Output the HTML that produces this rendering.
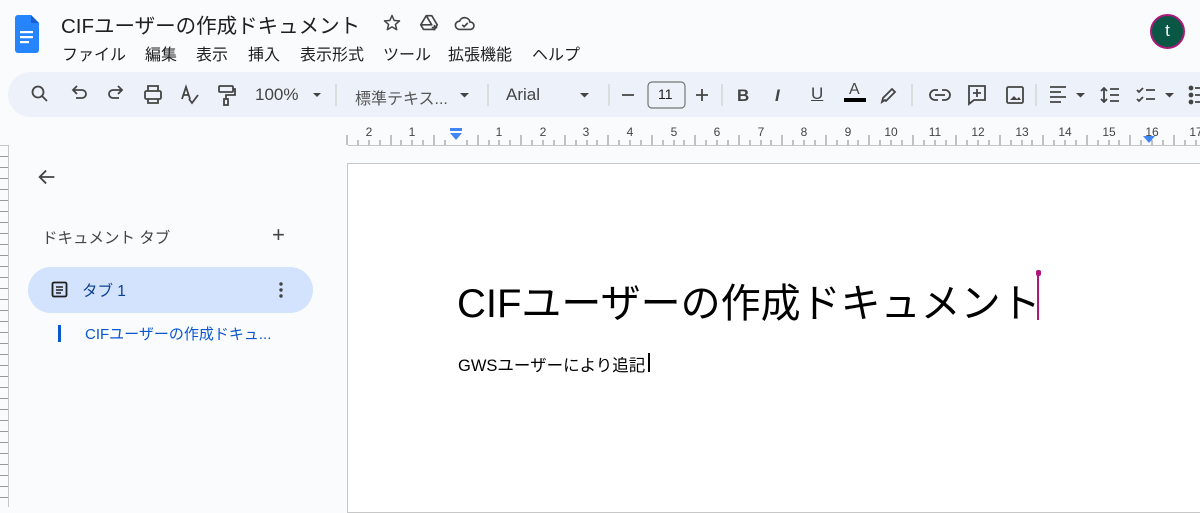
<!DOCTYPE html>
<html><head><meta charset="utf-8"><style>
*{margin:0;padding:0;box-sizing:border-box}
body{width:1200px;height:507px;overflow:hidden;background:#f9fbfd;font-family:"Liberation Sans","Noto Sans CJK JP",sans-serif;color:#1f1f1f;position:relative}
.a{position:absolute;white-space:nowrap}
.m{position:absolute;top:41px;font-size:16px;white-space:nowrap}
</style></head><body>
<svg class="a" style="left:15px;top:15px" width="24" height="38" viewBox="0 0 24 38">
<path d="M3 0H16L24 8V35a3 3 0 0 1-3 3H3a3 3 0 0 1-3-3V3a3 3 0 0 1 3-3z" fill="#2684fc"/>
<path d="M16 0V8H24z" fill="#1a5fd0"/>
<rect x="5" y="16" width="13" height="2.2" fill="#fff"/><rect x="5" y="21" width="13" height="2.2" fill="#fff"/><rect x="5" y="26" width="9" height="2.2" fill="#fff"/>
</svg>
<div class="a" style="left:61px;top:9px;font-size:20.5px;color:#1f1f1f">CIFユーザーの作成ドキュメント</div>
<svg class="a" style="left:382px;top:13px" width="20" height="20" viewBox="0 0 24 24"><path d="M12 3l2.6 6 6.4.5-4.9 4.2 1.5 6.3L12 16.6 6.4 20l1.5-6.3L3 9.5l6.4-.5z" fill="none" stroke="#444" stroke-width="1.8" stroke-linejoin="round"/></svg>
<svg class="a" style="left:418px;top:12px" width="22" height="22" viewBox="0 0 24 24"><path d="M9 4h6l6 10-3 5H6l-3-5z M9 4l6 10H3" fill="none" stroke="#444" stroke-width="1.8" stroke-linejoin="round"/><path d="M18 14v6M15 17h6" stroke="#444" stroke-width="1.8"/></svg>
<svg class="a" style="left:454px;top:13px" width="22" height="20" viewBox="0 0 24 20"><path d="M6 17a4.5 4.5 0 0 1 0-9 6 6 0 0 1 11.5 1A4 4 0 0 1 18 17z" fill="none" stroke="#444" stroke-width="1.8"/><path d="M9 12l2 2 4-4" fill="none" stroke="#444" stroke-width="1.8"/></svg>
<div class="m" style="left:62px">ファイル</div>
<div class="m" style="left:145px">編集</div>
<div class="m" style="left:196px">表示</div>
<div class="m" style="left:248px">挿入</div>
<div class="m" style="left:300px">表示形式</div>
<div class="m" style="left:383px">ツール</div>
<div class="m" style="left:448px">拡張機能</div>
<div class="m" style="left:532px">ヘルプ</div>
<div class="a" style="left:1150px;top:14px;width:35px;height:35px;border-radius:50%;background:#0b5745;border:2.5px solid #b0177a;color:#fff;font-size:17px;text-align:center;line-height:29px">t</div>
<div class="a" style="left:8px;top:72px;width:1220px;height:45px;border-radius:23px;background:#edf2fa"></div>
<svg class="a" style="left:0;top:72px" width="1200" height="45" viewBox="0 0 1200 45" fill="none" stroke="#444" stroke-width="1.8">
<circle cx="38" cy="20" r="5.5"/><path d="M42 24l5 5"/>
<path d="M74 18h8a4 4 0 0 1 0 8h-6M77 14l-4 4 4 4"/>
<path d="M121 18h-8a4 4 0 0 0 0 8h6M118 14l4 4-4 4"/>
<rect x="145" y="19" width="16" height="8" rx="1.5"/><path d="M148 19v-5h10v5M148 27v4h10v-4"/>
<path d="M182 27l4-12 4 12M183.5 23h5M189 27l3 4 6-8"/>
<rect x="219" y="14" width="14" height="6" rx="1"/><path d="M233 17h2v6h-9v4"/><rect x="224" y="27" width="4" height="6"/>
<path d="M313 21h8l-4 4z" fill="#444" stroke="none"/>
<path d="M336 12v22M488 12v22M609 12v22M722 12v22M912 12v22M1036 12v22" stroke="#c7c7c7" stroke-width="1"/>
<path d="M460 21h9l-4.5 4.5z M580 21h9l-4.5 4.5z M1076 21h9l-4.5 4.5z M1165 21h9l-4.5 4.5z" fill="#444" stroke="none"/>
<path d="M622 23h12M696 23h12M702 17v12"/>
<rect x="648" y="10" width="37" height="26" rx="4" stroke="#747775" stroke-width="1.2"/>
<path d="M885 28l-3 2 1-4 9-9 3 3-9 9z"/>
<path d="M935 23h10"/><path d="M938 18h-3a5 5 0 0 0 0 10h3M942 18h3a5 5 0 0 1 0 10h-3"/>
<path d="M969 14h16v14h-11l-5 4z"/><path d="M977 17v8M973 21h8"/>
<rect x="1007" y="15" width="16" height="16" rx="1.5"/><path d="M1010 28l4-4 3 3 2-2 2 3z" fill="#444" stroke="none"/>
<path d="M1050 15h16M1050 20h11M1050 25h16M1050 30h11"/>
<path d="M1104 16v14M1101 19l3-3 3 3M1101 27l3 3 3-3M1110 17h9M1110 23h9M1110 29h9"/>
<path d="M1137 18l2 2 4-4M1137 27l2 2 4-4M1146 18h9M1146 27h9"/>
<circle cx="1191" cy="16" r="1.5" fill="#444"/><circle cx="1191" cy="23" r="1.5" fill="#444"/><circle cx="1191" cy="30" r="1.5" fill="#444"/><path d="M1195 16h6M1195 23h6M1195 30h6"/>
</svg>
<div class="a" style="left:255px;top:85px;font-size:17px;color:#444">100%</div>
<div class="a" style="left:355px;top:85px;font-size:16px;color:#555">標準テキス...</div>
<div class="a" style="left:506px;top:85px;font-size:17px;color:#444">Arial</div>
<div class="a" style="left:658px;top:86px;font-size:14px;color:#1f1f1f">11</div>
<div class="a" style="left:737px;top:86px;font-size:17px;font-weight:bold;color:#444">B</div>
<div class="a" style="left:775px;top:86px;font-size:17px;font-style:italic;font-weight:bold;color:#444">I</div>
<div class="a" style="left:811px;top:84px;font-size:17px;text-decoration:underline;color:#444">U</div>
<div class="a" style="left:849px;top:81px;font-size:16px;color:#444">A</div>
<div class="a" style="left:844px;top:98px;width:22px;height:4px;background:#000"></div>
<svg class="a" style="left:0;top:118px" width="1200" height="30" viewBox="0 0 1200 30">
<path d="M347 27V17M358 27V22M369 27V22M380 27V22M391 27V17M401 27V22M412 27V22M423 27V22M434 27V17M445 27V22M467 27V22M478 27V17M489 27V22M499 27V22M510 27V22M521 27V17M532 27V22M543 27V22M554 27V22M565 27V17M576 27V22M587 27V22M597 27V22M608 27V17M619 27V22M630 27V22M641 27V22M652 27V17M663 27V22M674 27V22M684 27V22M695 27V17M706 27V22M717 27V22M728 27V22M739 27V17M750 27V22M761 27V22M771 27V22M782 27V17M793 27V22M804 27V22M815 27V22M826 27V17M837 27V22M848 27V22M858 27V22M869 27V17M880 27V22M891 27V22M902 27V22M913 27V17M924 27V22M935 27V22M946 27V22M956 27V17M967 27V22M978 27V22M989 27V22M1000 27V17M1011 27V22M1022 27V22M1032 27V22M1043 27V17M1054 27V22M1065 27V22M1076 27V22M1087 27V17M1098 27V22M1109 27V22M1119 27V22M1130 27V17M1141 27V22M1152 27V22M1163 27V22M1174 27V17M1185 27V22M1196 27V22" stroke="#888" stroke-width="1"/>
<g font-family="Liberation Sans,sans-serif" font-size="12" fill="#444" text-anchor="middle">
<text x="369" y="18">2</text><text x="412" y="18">1</text><text x="499" y="18">1</text><text x="543" y="18">2</text><text x="586" y="18">3</text><text x="630" y="18">4</text><text x="674" y="18">5</text><text x="717" y="18">6</text><text x="761" y="18">7</text><text x="804" y="18">8</text><text x="848" y="18">9</text><text x="891" y="18">10</text><text x="935" y="18">11</text><text x="978" y="18">12</text><text x="1022" y="18">13</text><text x="1065" y="18">14</text><text x="1109" y="18">15</text><text x="1152" y="18">16</text><text x="1196" y="18">17</text></g>
<rect x="450" y="10" width="12" height="3" fill="#4285f4"/><path d="M450 15h12l-6 7z" fill="#4285f4"/>
<path d="M1143 18h12l-6 7z" fill="#4285f4"/>
</svg>
<div class="a" style="left:0;top:145px;width:1200px;height:1px;background:#c7c7c7"></div>
<div class="a" style="left:0;top:146px;width:8px;height:361px;background:repeating-linear-gradient(#f9fbfd 0 10px,#999 10px 11px)"></div>
<div class="a" style="left:8px;top:145px;width:340px;height:362px;background:#f9fbfd;border-left:1px solid #c7c7c7"></div>
<svg class="a" style="left:36px;top:166px" width="22" height="22" viewBox="0 0 24 24"><path d="M20 12H5M11 5l-7 7 7 7" fill="none" stroke="#444" stroke-width="2"/></svg>
<div class="a" style="left:42px;top:226px;font-size:15.5px;color:#444">ドキュメント タブ</div>
<div class="a" style="left:272px;top:222px;font-size:22px;color:#444;font-weight:300">+</div>
<div class="a" style="left:28px;top:267px;width:285px;height:46px;border-radius:23px;background:#d3e3fd"></div>
<svg class="a" style="left:50px;top:280px" width="20" height="20" viewBox="0 0 20 20"><rect x="2.5" y="2.5" width="14" height="14" rx="1.5" fill="none" stroke="#1f1f1f" stroke-width="1.8"/><path d="M6 7h7M6 10h7M6 13h5" stroke="#1f1f1f" stroke-width="1.5"/></svg>
<div class="a" style="left:82px;top:279px;font-size:15.5px;color:#0b3f91">タブ 1</div>
<svg class="a" style="left:276px;top:280px" width="10" height="20"><circle cx="5" cy="4" r="1.7" fill="#444"/><circle cx="5" cy="10" r="1.7" fill="#444"/><circle cx="5" cy="16" r="1.7" fill="#444"/></svg>
<div class="a" style="left:58px;top:325px;width:3px;height:17px;background:#0b57d0"></div>
<div class="a" style="left:85px;top:323px;font-size:15px;color:#0b57d0">CIFユーザーの作成ドキュ...</div>
<div class="a" style="left:347px;top:163px;width:860px;height:350px;background:#fff;border:1px solid #c7c7c7"></div>
<div class="a" style="left:457px;top:271px;font-size:40px;color:#000">CIFユーザーの作成ドキュメント</div>
<div class="a" style="left:1037px;top:272px;width:2px;height:48px;background:#b0177a"></div>
<div class="a" style="left:1036px;top:270px;width:5px;height:6px;border-radius:2px;background:#b0177a"></div>
<div class="a" style="left:458px;top:352px;font-size:16.5px;color:#000">GWSユーザーにより追記</div>
<div class="a" style="left:648px;top:353px;width:1.5px;height:19px;background:#000"></div>
</body></html>
